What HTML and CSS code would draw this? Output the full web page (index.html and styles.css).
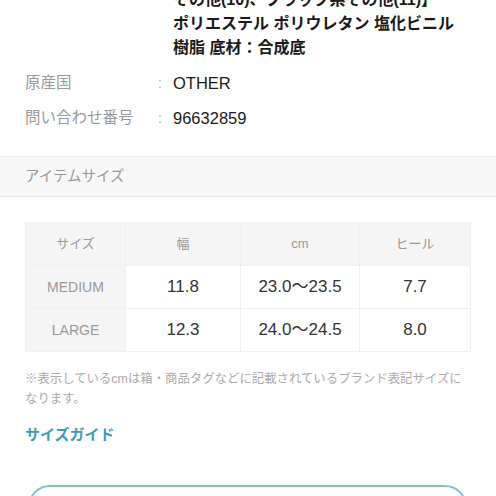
FILE: index.html
```html
<!DOCTYPE html>
<html lang="ja">
<head>
  <meta charset="UTF-8">
  <title>アイテム詳細</title>
  <link rel="stylesheet" href="styles.css">
</head>
<body>
  <div class="spec">
    <div class="spec-row material">
      <span class="label"></span>
      <span class="colon"></span>
      <span class="value">その他(10)、ブラック系その他(11)】<br>ポリエステル ポリウレタン 塩化ビニル<br>樹脂 底材：合成底</span>
    </div>
    <div class="spec-row">
      <span class="label">原産国</span>
      <span class="colon">:</span>
      <span class="value">OTHER</span>
    </div>
    <div class="spec-row">
      <span class="label">問い合わせ番号</span>
      <span class="colon">:</span>
      <span class="value">96632859</span>
    </div>
  </div>

  <div class="section-head">アイテムサイズ</div>

  <div class="size-wrap">
    <table class="size-table">
      <tr>
        <th>サイズ</th>
        <th>幅</th>
        <th>cm</th>
        <th>ヒール</th>
      </tr>
      <tr>
        <th>MEDIUM</th>
        <td>11.8</td>
        <td>23.0〜23.5</td>
        <td>7.7</td>
      </tr>
      <tr>
        <th>LARGE</th>
        <td>12.3</td>
        <td>24.0〜24.5</td>
        <td>8.0</td>
      </tr>
    </table>

    <p class="note">※表示しているcmは箱・商品タグなどに記載されているブランド表記サイズになります。</p>

    <a class="guide" href="#">サイズガイド</a>

    <div class="outline-btn"></div>
  </div>
</body>
</html>
```

FILE: styles.css
```css
body {
  margin: 0;
  background: #fff;
  font-family: "Helvetica Neue", "Liberation Sans", "Noto Sans CJK JP", sans-serif;
  color: #222;
  overflow: hidden;
}

.spec {
  padding: 0 25px;
  margin-top: -12px;
}

.spec-row {
  display: grid;
  grid-template-columns: 133px 15px 1fr;
  font-size: 16px;
  line-height: 24px;
  margin-bottom: 11px;
}

.spec-row .label {
  color: #9a9a9a;
  font-size: 15.5px;
}

.spec-row .colon {
  color: #aaa;
  font-size: 14px;
}

.spec-row .value {
  color: #1a1a1a;
  font-size: 16.5px;
}

.spec-row.material .value {
  font-weight: 600;
  font-size: 16px;
}

.section-head {
  margin-top: 26px;
  height: 39px;
  line-height: 38px;
  padding-left: 25px;
  background: #f7f7f7;
  border-top: 1px solid #ececec;
  border-bottom: 1px solid #e6e6e6;
  color: #999;
  font-size: 14.5px;
}

.size-wrap {
  padding: 25px 25px 0;
}

.size-table {
  width: 100%;
  border-collapse: collapse;
  table-layout: fixed;
}

.size-table th,
.size-table td {
  height: 42px;
  text-align: center;
  border: 1px solid #f0f0f0;
  padding: 0;
  line-height: 20px;
}

.size-table th {
  background: #f5f5f5;
  color: #999;
  font-weight: normal;
  font-size: 13px;
}

.size-table tr:not(:first-child) th {
  font-size: 14px;
}

.size-table td {
  color: #333;
  font-size: 17px;
  background: #fff;
}

.size-table th:nth-child(1) { width: 99px; }
.size-table th:nth-child(2) { width: 114px; }
.size-table th:nth-child(3) { width: 118px; }

.note {
  margin: 17px 0 0;
  color: #aaa;
  font-size: 12.4px;
  line-height: 20px;
}

.guide {
  display: block;
  margin-top: 14px;
  color: #3b9cb6;
  font-weight: bold;
  font-size: 15px;
  text-decoration: none;
}

.outline-btn {
  margin: 41px 4px 0 3px;
  height: 48px;
  border: 2px solid #7cc0d6;
  border-radius: 22px;
}
```
